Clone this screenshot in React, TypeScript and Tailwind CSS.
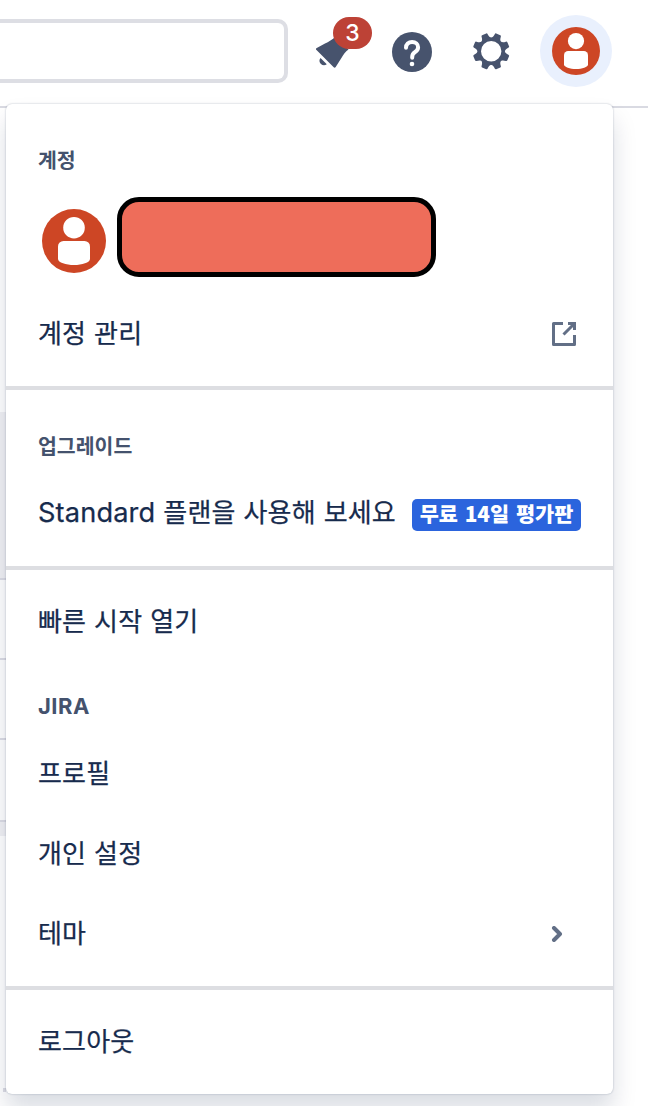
import React from 'react';

interface SectionProps {
  children: React.ReactNode;
  className: string;
}

const Section: React.FC<SectionProps> = ({ children, className }) => (
  <section className={`border-b-4 border-[#dddee2] ${className}`}>{children}</section>
);

const Heading: React.FC<{ children: React.ReactNode }> = ({ children }) => (
  <h2 className="px-8 h-8 flex items-center text-[20.5px] font-bold text-[#44526d]">
    <span className="pb-px">{children}</span>
  </h2>
);

interface MenuItemProps {
  label: React.ReactNode;
  children?: React.ReactNode;
}

const MenuItem: React.FC<MenuItemProps> = ({ label, children }) => (
  <button className="w-full h-20 pl-8 pr-8 flex items-center text-left text-[26px] text-[#172b4d] whitespace-nowrap">
    <span className="pb-[5px] [word-spacing:2px] tracking-[0.15px] [-webkit-text-stroke:0.25px_#172b4d]">{label}</span>
    {children}
  </button>
);

const Avatar: React.FC<{ className: string }> = ({ className }) => (
  <svg className={className} viewBox="0 0 64 64">
    <circle cx="32" cy="32" r="32" fill="#cd4625" />
    <circle cx="32" cy="18.7" r="10.8" fill="#fff" />
    <path d="M16 37.5a5.5 5.5 0 0 1 5.5-5.5h21a5.5 5.5 0 0 1 5.5 5.5V50c0 3.5-8 6-16 6s-16-2.500-16-6z" fill="#fff" />
  </svg>
);

const GEAR_TEETH = [22.5, 67.5, 112.5, 157.5, 202.5, 247.5, 292.5, 337.5];

const Header: React.FC = () => (
  <header className="h-[108px] flex items-start bg-white border-b-2 border-[#d9dae2]">
    {/* Search */}
    <div className="mt-[19px] w-[288px] h-16 shrink-0 border-4 border-l-0 border-[#dddee4] rounded-r-[10px]" />

    {/* Notifications */}
    <div className="relative ml-6 mt-4 w-[64px] h-[64px]">
      <svg className="w-full h-full" viewBox="312 16 64 64" fill="#47536d">
        <path d="M316.300 48.300c-.5.500-.4 1.300.2 1.800l17.200 17.200c.6.600 1.500.500 2-.2l5.700-9.100c2.200-3.500 3.800-6.100 7.100-8.500l-13-13c-3 3.400-7 5.200-10.500 7.100z" />
        <path d="M320.500 58a4.500 4.500 0 0 0 6.300 6.300z" />
      </svg>
      <span className="absolute left-[21px] top-px w-[39px] h-8 rounded-full bg-[#bd4236] text-white text-[23px] font-medium font-['Inter',sans-serif] flex items-center justify-center">
        3
      </span>
    </div>

    {/* Help */}
    <svg className="ml-4 mt-8 w-10 h-10" viewBox="0 0 40 40">
      <circle cx="20" cy="20" r="20" fill="#47536d" />
      <path d="M14 15.800c0-3.500 2.600-5.800 6.100-5.800s6 2.200 6 5.300c0 2.400-1.200 3.700-3.300 5-1.900 1.200-2.600 2.200-2.600 4.700v.8" fill="none" stroke="#fff" strokeWidth="4" strokeLinecap="round" />
      <circle cx="20" cy="32" r="2.300" fill="#fff" />
    </svg>

    {/* Settings */}
    <svg className="ml-[39px] mt-[31px] w-10 h-10" viewBox="-20 -20 40 40">
      {GEAR_TEETH.map((angle) => (
        <path key={angle} d="M-5.200-12.500C-3.900-13.800-3.500-15-3.300-17.200q.1-1.200 1.100-1.200h4.400q1 0 1.100 1.200C3.500-15 3.900-13.800 5.200-12.500z" fill="#47536d" transform={`translate(.2 .3) rotate(${angle})`} />
      ))}
      <circle cx=".2" cy=".3" r="12" fill="none" stroke="#47536d" strokeWidth="3.600" />
    </svg>

    {/* Profile */}
    <div className="ml-[29px] mt-[15px] w-[72px] h-[72px] rounded-full bg-[#e9f0fd] flex items-center justify-center">
      <Avatar className="w-12 h-12" />
    </div>
  </header>
);

const AccountMenu: React.FC = () => (
  <div className="absolute left-[6px] top-[104px] w-[607px] h-[990px] flex flex-col bg-white rounded-[6px] shadow-[0_0_2px_rgba(9,30,66,0.31),0_16px_24px_rgba(9,30,66,0.15)]">
    <Section className="h-[286px] pt-10">
      <Heading>계정</Heading>
      <div className="pl-9 pt-[21px] h-[118px] flex">
        <Avatar className="mt-3 w-16 h-16 shrink-0" />
        <div className="ml-[11px] w-[319px] h-20 rounded-[22px] border-[5px] border-black bg-[#ee6d5a]" />
      </div>
      <MenuItem label="계정 관리">
        <svg className="ml-auto mr-[5px] w-6 h-6" viewBox="0 0 24 24" fill="none" stroke="#626f86" strokeWidth="3">
          <path d="M11 1.500H1.500v21h21V13" strokeLinejoin="round" />
          <path d="M11.500 12.500 22 2M16 1.500h6.500V8" />
        </svg>
      </MenuItem>
    </Section>

    <Section className="h-[180px] pt-10">
      <Heading>업그레이드</Heading>
      <div className="pt-[13px]">
        <MenuItem
          label={
            <>
              <span className="font-['Inter',sans-serif] text-[27.2px]">Standard</span> 플랜을 사용해 보세요
            </>
          }
        >
          <span className="ml-auto w-[169px] h-8 shrink-0 -mt-px rounded-[5px] bg-[#2b64dd] text-white text-[20.8px] font-black [word-spacing:2px] flex items-center justify-center">
            <span className="pb-px">무료 14일 평가판</span>
          </span>
        </MenuItem>
      </div>
    </Section>

    <Section className="h-[420px] pt-3">
      <MenuItem label="빠른 시작 열기" />
      <div className="pt-[29px]">
        <Heading>
          <span className="font-['Inter',sans-serif] text-[22px] tracking-[0.5px]">JIRA</span>
        </Heading>
      </div>
      <div className="pt-[11px]">
        <MenuItem label="프로필" />
        <MenuItem label="개인 설정" />
        <MenuItem label="테마">
          <svg className="ml-auto mr-[18px] w-3 h-4" viewBox="0 0 12 16" fill="none" stroke="#626f86" strokeWidth="4" strokeLinecap="round" strokeLinejoin="round">
            <path d="m3 2 6 6-6 6" />
          </svg>
        </MenuItem>
      </div>
    </Section>

    <div className="pt-3">
      <MenuItem label="로그아웃" />
    </div>
  </div>
);

// Board rows that peek out from under the menu
const BoardEdge: React.FC = () => (
  <main className="h-[998px] w-[6px] flex flex-col">
    <div className="h-[304px]" />
    <div className="h-[168px] bg-[#f1f1f4] border-b-2 border-[#dcdce4]" />
    <div className="h-20 border-b-2 border-[#dcdce4]" />
    <div className="h-20 border-b-2 border-[#dcdce4]" />
    <div className="h-[82px] border-b-2 border-[#dcdce4]" />
    <div className="h-[14px] bg-[#f1f1f4]" />
    <div className="mt-[252px] ml-[3px] h-1 bg-[#dcdce4]" />
  </main>
);

const App: React.FC = () => (
  <div className="relative w-[648px] h-[1106px] overflow-hidden bg-white font-['Noto_Sans_CJK_KR',sans-serif]">
    <Header />
    <BoardEdge />
    <AccountMenu />
  </div>
);

export default App;
